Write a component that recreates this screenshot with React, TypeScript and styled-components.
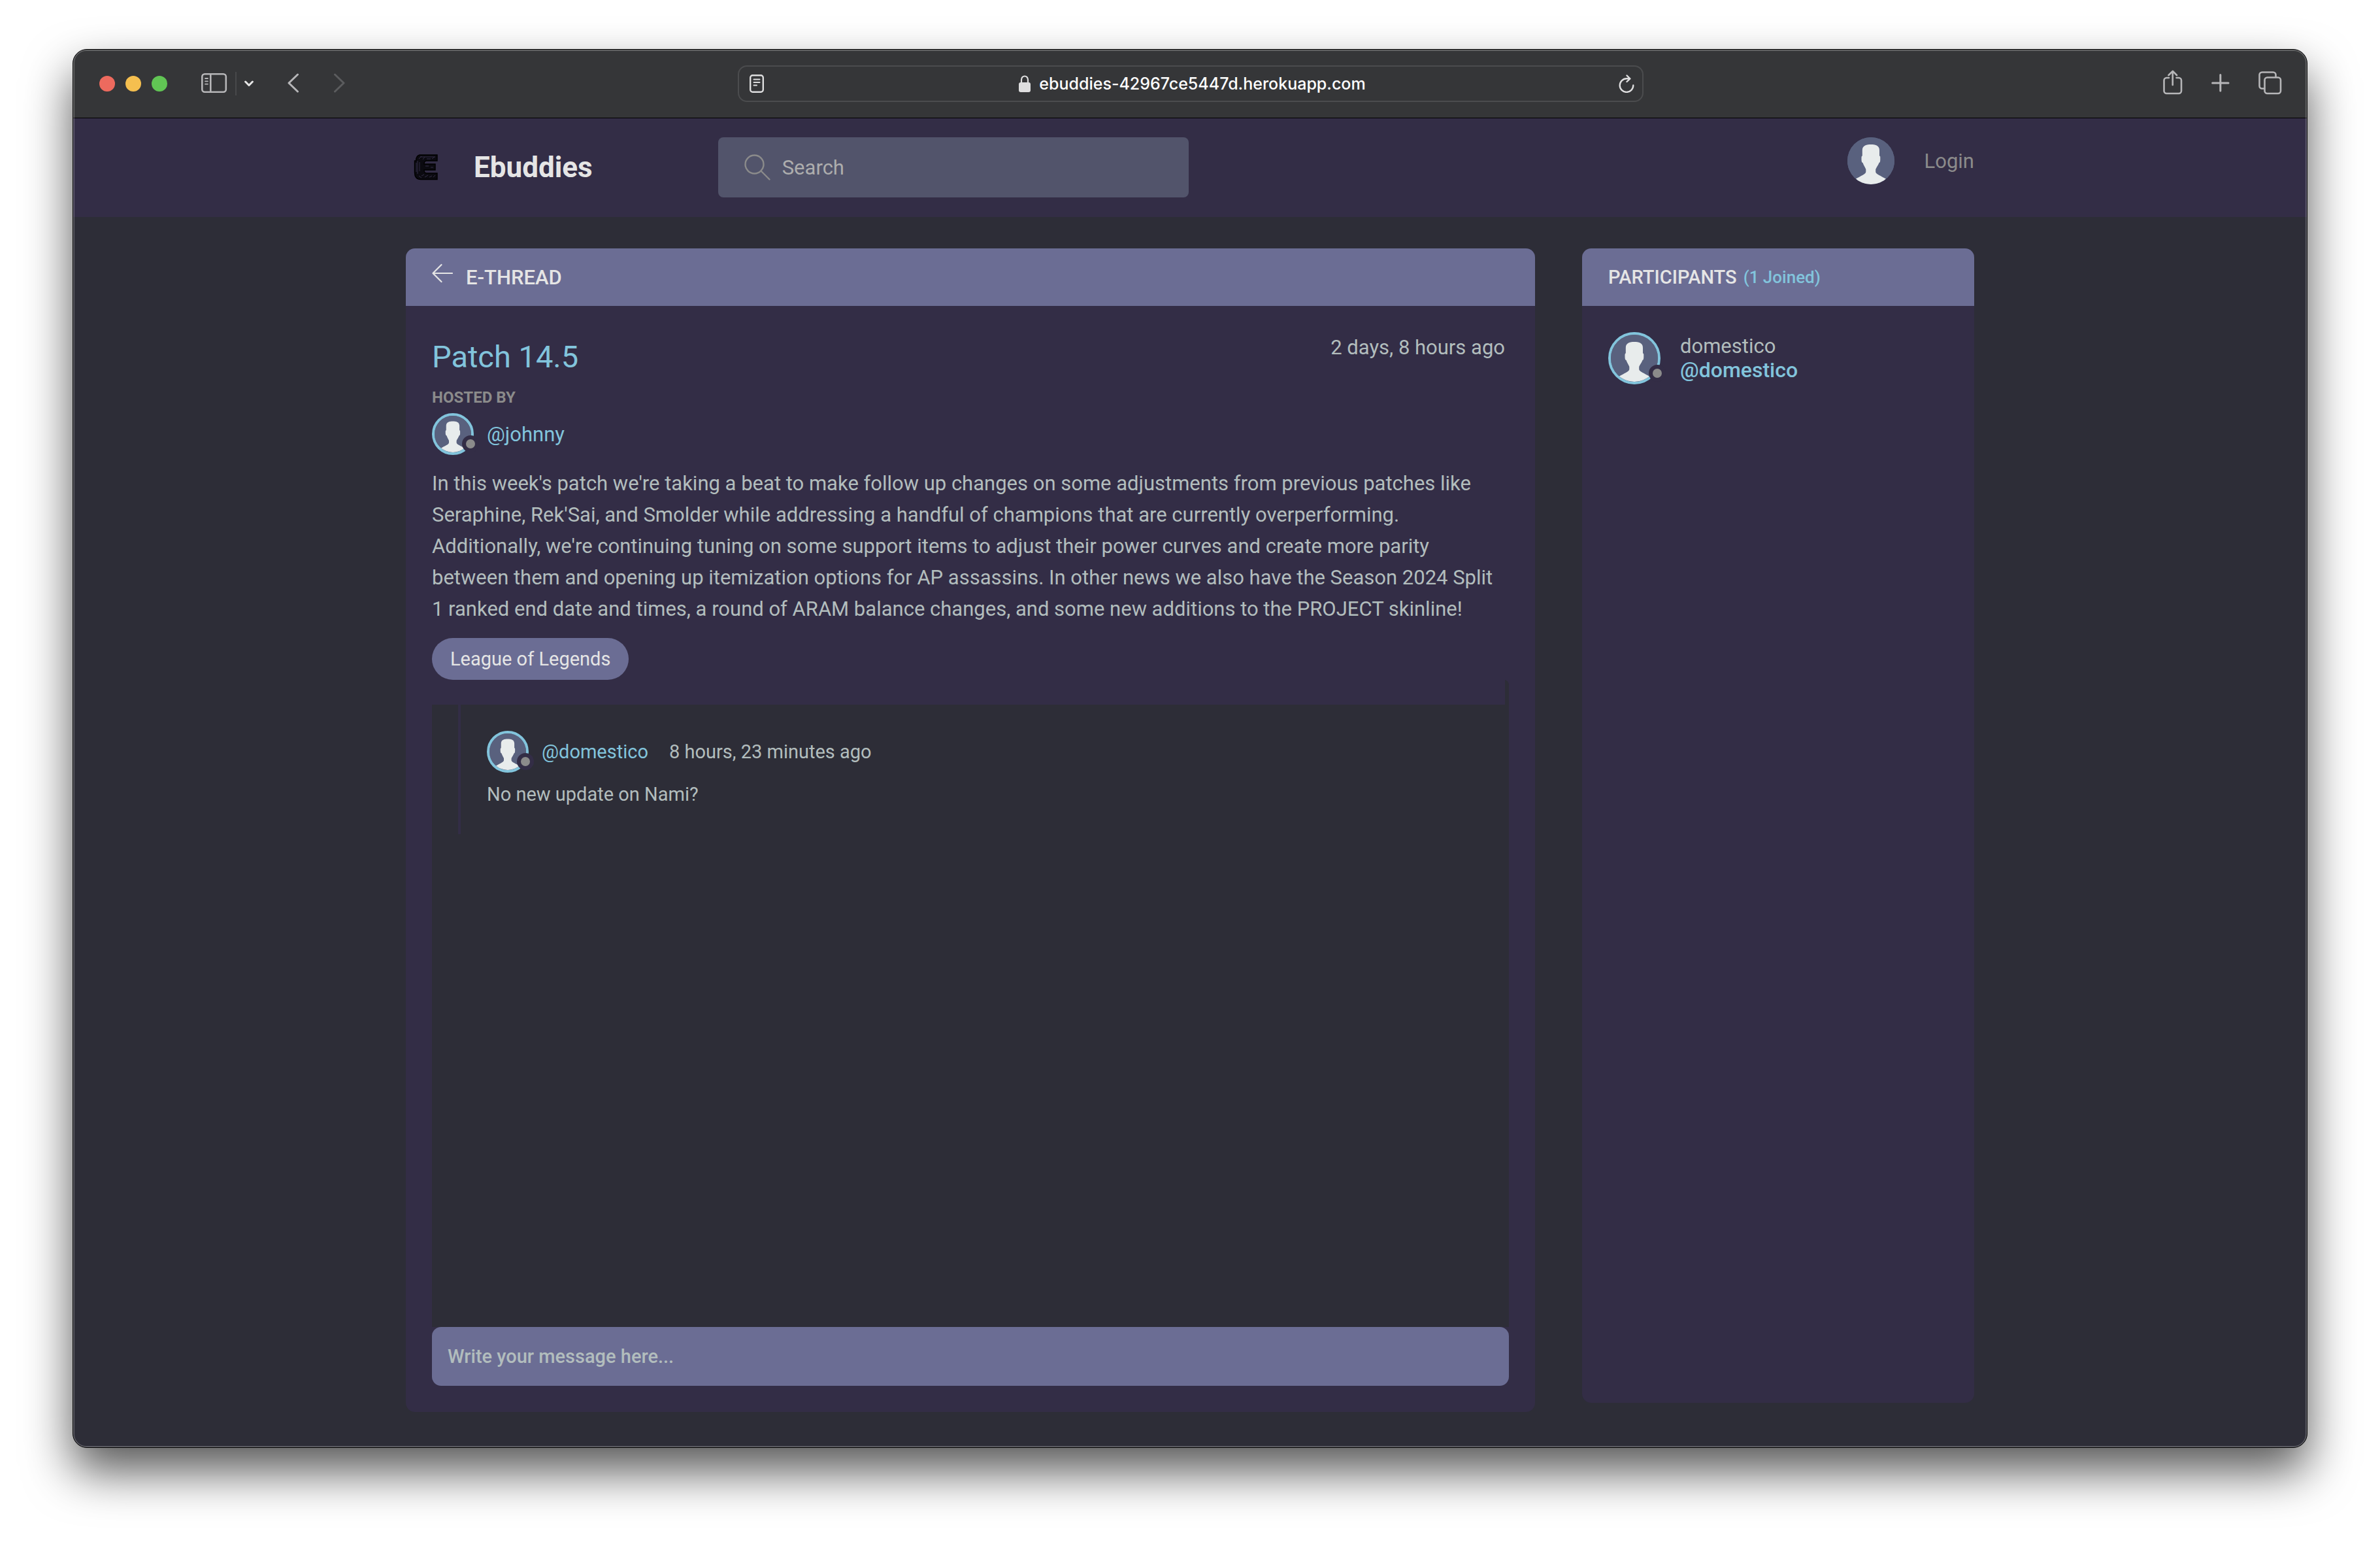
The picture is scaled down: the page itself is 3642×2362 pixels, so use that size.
import React from 'react';
import styled, { createGlobalStyle } from 'styled-components';

const color = {
  page: '#2d2d37',
  panel: '#332d46',
  bar: '#6b6d94',
  field: '#52546b',
  accent: '#82c4dc',
  light: '#e5e5e5',
  text: '#b2bdbd',
  gray: '#8b8b8b',
  chrome: '#353638',
  glyph: '#b6b6b8',
};

const GlobalStyle = createGlobalStyle`
  *, *::before, *::after { box-sizing: border-box; }
  body {
    margin: 0;
    background: #fff;
    color: ${color.text};
    font-family: Roboto, "Liberation Sans", sans-serif;
    font-size: 31px;
  }
  h1, h2, h3, p, ul { margin: 0; padding: 0; }
  ul { list-style: none; }
  a { color: inherit; text-decoration: none; }
  button, input { font-family: inherit; }
  svg { display: block; flex: none; }
`;

const Desktop = styled.div`
  display: flex;
  min-height: 100vh;
  padding: 75px 111px 147px;
`;

const BrowserWindow = styled.div`
  position: relative;
  display: flex;
  flex: 1;
  flex-direction: column;
  min-width: 0;
  overflow: hidden;
  border: 1px solid #000;
  border-radius: 22px;
  background: ${color.page};
  box-shadow: 0 36px 72px rgba(0, 0, 0, 0.66);

  &::after {
    content: '';
    position: absolute;
    inset: 0;
    border: 2px solid rgba(255, 255, 255, 0.22);
    border-radius: 20px;
    pointer-events: none;
  }
`;

const Chrome = styled.div`
  position: relative;
  display: grid;
  grid-template-columns: minmax(max-content, 1fr) minmax(0, 1386px) minmax(max-content, 1fr);
  align-items: center;
  height: 104px;
  padding: 0 38px 0 40px;
  background: ${color.chrome};
  box-shadow: 0 1px 0 #000;
`;

const ChromeGroup = styled.div<{ $end?: boolean }>`
  display: flex;
  align-items: center;
  justify-content: ${(p) => (p.$end ? 'flex-end' : 'flex-start')};
  gap: ${(p) => (p.$end ? 44 : 52)}px;
`;

const Lights = styled.div`
  display: flex;
  gap: 16px;
`;

const Light = styled.button<{ $fill: string }>`
  width: 24px;
  height: 24px;
  padding: 0;
  border: 0;
  border-radius: 50%;
  background: ${(p) => p.$fill};
`;

const SidebarControl = styled.div`
  display: flex;
  align-items: center;
  gap: 12px;
`;

const Divider = styled.span`
  width: 2px;
  height: 36px;
  background: #48494b;
`;

const IconButton = styled.button<{ $tone?: string }>`
  display: flex;
  padding: 0;
  border: 0;
  background: none;
  color: ${(p) => p.$tone ?? color.glyph};
`;

const AddressBar = styled.div`
  display: grid;
  grid-template-columns: 1fr auto 1fr;
  align-items: center;
  height: 56px;
  padding: 0 12px 0 16px;
  border: 2px solid #4b4c4e;
  border-radius: 14px;
`;

const Address = styled.button`
  display: flex;
  align-items: center;
  gap: 12px;
  padding: 0;
  border: 0;
  background: none;
  color: #fff;
  font: 500 25px/32px Inter, sans-serif;
`;

const ReloadSlot = styled.div`
  display: flex;
  justify-content: flex-end;
`;

const Container = styled.div`
  width: min(2400px, 92%);
  margin: 0 auto;
`;

const SiteHeader = styled.header`
  padding: 30px 0;
  background: ${color.panel};
`;

const HeaderRow = styled(Container)`
  display: flex;
  align-items: center;
`;

const Brand = styled.a`
  display: flex;
  align-items: center;
  gap: 44px;
  margin-right: 192px;
  color: ${color.light};
  font-size: 44px;
  font-weight: 700;
`;

const SearchForm = styled.form`
  display: flex;
  flex: 0 1 720px;
  align-items: center;
  gap: 18px;
  height: 92px;
  padding: 0 40px;
  border-radius: 8px;
  background: ${color.field};
  color: ${color.gray};
`;

const SearchInput = styled.input`
  flex: 1;
  min-width: 0;
  padding: 0;
  border: 0;
  outline: 0;
  background: none;
  color: ${color.light};
  font-size: 31px;

  &::placeholder { color: #adadad; opacity: 1; }
`;

const LoginLink = styled.a`
  display: flex;
  align-self: flex-start;
  align-items: center;
  gap: 46px;
  margin-left: auto;
  color: ${color.gray};
  font-size: 31px;
`;

const Columns = styled(Container)`
  display: grid;
  flex: 1;
  grid-template-columns: minmax(0, 2.88fr) minmax(0, 1fr);
  gap: 72px;
  padding: 48px 0 54px;
`;

const Panel = styled.section<{ $gapBelow?: boolean }>`
  display: flex;
  flex-direction: column;
  margin-bottom: ${(p) => (p.$gapBelow ? 14 : 0)}px;
  overflow: hidden;
  border-radius: 14px;
  background: ${color.panel};
`;

const PanelHeader = styled.div`
  display: flex;
  align-items: center;
  height: 88px;
  padding: 0 40px;
  background: ${color.bar};
`;

const PanelTitle = styled.h2<{ $small?: boolean }>`
  color: ${color.light};
  font-size: ${(p) => (p.$small ? 29 : 31)}px;
  font-weight: 500;
  text-transform: uppercase;
`;

const BackLink = styled.a`
  display: flex;
  margin-right: 20px;
  padding-bottom: 12px;
  color: ${color.light};
`;

const JoinedCount = styled.span`
  margin-left: 10px;
  color: ${color.accent};
  font-size: 26px;
  font-weight: 500;
`;

const ThreadBody = styled.div`
  display: flex;
  flex: 1;
  flex-direction: column;
  padding: 40px;
`;

const ThreadTop = styled.div`
  display: flex;
  align-items: flex-start;
  justify-content: space-between;
  padding-right: 6px;
`;

const ThreadTitle = styled.h3`
  color: ${color.accent};
  font-size: 47px;
  font-weight: 400;
  line-height: 76px;
`;

const ThreadTime = styled.time`
  line-height: 48px;
`;

const HostedBy = styled.p`
  color: ${color.gray};
  font-size: 24px;
  font-weight: 700;
  line-height: 48px;
  text-transform: uppercase;
`;

const PersonLine = styled.div`
  display: flex;
  align-items: center;
  gap: 20px;
`;

const PersonLink = styled.a<{ $size?: number; $strong?: boolean }>`
  color: ${color.accent};
  font-size: ${(p) => p.$size ?? 31}px;
  font-weight: ${(p) => (p.$strong ? 500 : 400)};
`;

const Description = styled.p`
  margin: 20px 0;
  line-height: 48px;
`;

const Tag = styled.a`
  display: flex;
  align-items: center;
  align-self: flex-start;
  height: 64px;
  padding: 0 28px;
  border-radius: 32px;
  background: ${color.bar};
  color: ${color.light};
  font-size: 29px;
`;

const Comments = styled.div`
  flex: 1;
  border-top-right-radius: 8px;
  background: ${color.page};

  &::before {
    content: '';
    display: block;
    height: 38px;
    margin-right: 6px;
    background: ${color.panel};
  }
`;

const Comment = styled.article`
  display: grid;
  gap: 12px;
  margin-left: 40px;
  padding: 40px;
  border-left: 4px solid ${color.panel};
  font-size: 29px;
`;

const CommentTime = styled.time`
  margin-left: 12px;
`;

const CommentText = styled.p`
  line-height: 42px;
`;

const MessageForm = styled.form`
  display: flex;
`;

const MessageInput = styled.input`
  flex: 1;
  min-width: 0;
  height: 90px;
  padding: 0 24px;
  border: 0;
  border-radius: 14px;
  outline: 0;
  background: ${color.bar};
  color: ${color.light};
  font-size: 29px;
  font-weight: 500;

  &::placeholder { color: ${color.text}; opacity: 1; }
`;

const People = styled.ul`
  padding: 40px;
`;

const Person = styled.li`
  display: flex;
  align-items: center;
  gap: 30px;
`;

const PersonNames = styled.div`
  display: grid;
  line-height: 36px;
`;

const AvatarFrame = styled.div<{ $size: number; $ring?: boolean }>`
  position: relative;
  flex: none;
  width: ${(p) => p.$size}px;
  height: ${(p) => p.$size}px;
  border: ${(p) => (p.$ring ? `4px solid ${color.accent}` : '0')};
  border-radius: 50%;
  background: #59617e;

  svg {
    width: 100%;
    height: 100%;
    border-radius: 50%;
  }
`;

const StatusDot = styled.span`
  position: absolute;
  right: -12px;
  bottom: 0;
  width: 26px;
  height: 26px;
  border: 6px solid ${color.panel};
  border-radius: 50%;
  background: ${color.gray};
`;

function Avatar({ size, ring }: { size: number; ring?: boolean }) {
  return (
    <AvatarFrame $size={size} $ring={ring}>
      <svg viewBox="0 0 72 72" aria-hidden="true">
        <rect width="72" height="72" fill="#59617e" />
        <path
          fill="#e8ecec"
          d="M36 11C42 11 49 12 49 20V28.5C50.5 28.5 50.3 30 50.3 33C50.3 37 50 38.5 48.5 39C47 43 45 45 43.2 49V53C44 56 46 56.5 58.8 63.5V72H13V63.5C26 56.5 27.5 56 28.3 53V49C26.5 45 25 43 23.5 39C22 38.5 21.5 37 21.5 33C21.5 30 21.5 28.5 22.8 28.5V20C22.8 12 30 11 36 11Z"
        />
      </svg>
      {ring && <StatusDot />}
    </AvatarFrame>
  );
}

function ChromeIcon({ width, stroke = 2.6, children }: { width: number; stroke?: number; children: React.ReactNode }) {
  return (
    <svg
      width={width}
      height="42"
      viewBox={`0 0 ${width} 42`}
      fill="none"
      stroke="currentColor"
      strokeWidth={stroke}
      strokeLinecap="round"
      strokeLinejoin="round"
      aria-hidden="true"
    >
      {children}
    </svg>
  );
}

function Logo() {
  return (
    <svg width="60" height="40" viewBox="0 0 60 40" fill="none" aria-hidden="true">
      <path
        d="M21 1H48V10H32C29 10 28 12 28 15H45V24H28C28 27 29 29 32 29H48V38.500H23C16 38.500 13.500 34 13.500 28V10H15.500C15.500 5 17 2 21 1Z"
        fill="#0b0a10"
        stroke="#000"
        strokeWidth="1.4"
      />
      <path
        d="M22 4H45M20 7L24 3M26 8L29 4M32 7H38M40 7L44 4M18 10V30M21 12V26M24 33L28 31M29 35L34 32M36 35L40 33M42 35L45 32M30 18H35M38 20H42M20 33L24 36M16 13V27"
        stroke="#332d46"
        strokeWidth="1"
      />
    </svg>
  );
}

function BrowserChrome() {
  return (
    <Chrome>
      <ChromeGroup>
        <Lights>
          <Light $fill="#ed6a5e" aria-label="Close" />
          <Light $fill="#f5bf4f" aria-label="Minimise" />
          <Light $fill="#61c554" aria-label="Full screen" />
        </Lights>
        <SidebarControl>
          <IconButton aria-label="Show sidebar">
            <ChromeIcon width={40}>
              <rect x="1.300" y="6.300" width="36.500" height="27.500" rx="4" />
              <path d="M14.300 6.500V33.500" />
              <path d="M6 13H10M6 17.300H10M6 21.600H10" strokeWidth="1.800" />
            </ChromeIcon>
          </IconButton>
          <Divider />
          <IconButton aria-label="Sidebar menu" $tone="#e6e6e6">
            <ChromeIcon width={14} stroke={3}>
              <path d="M1.600 18L7 23.500L12.400 18" />
            </ChromeIcon>
          </IconButton>
        </SidebarControl>
        <IconButton aria-label="Back">
          <ChromeIcon width={18} stroke={3}>
            <path d="M15.500 7L2 20L15.500 33" />
          </ChromeIcon>
        </IconButton>
        <IconButton aria-label="Forward" $tone="#5b5c5e">
          <ChromeIcon width={18} stroke={3}>
            <path d="M2.500 7L16 20L2.500 33" />
          </ChromeIcon>
        </IconButton>
      </ChromeGroup>

      <AddressBar>
        <IconButton aria-label="Show reader" $tone="#dededf">
          <svg width="22" height="28" viewBox="0 0 22 28" fill="none" stroke="currentColor" strokeLinecap="round" aria-hidden="true">
            <rect x="1.200" y="1.200" width="19.600" height="25.600" rx="3.500" strokeWidth="2.400" />
            <path d="M6.500 7.500H15.500M6.500 12H15.500M6.500 16.500H11" strokeWidth="2" />
          </svg>
        </IconButton>
        <Address>
          <svg width="20" height="26" viewBox="0 0 20 26" aria-hidden="true">
            <rect x="1" y="11" width="18" height="15" rx="3" fill="#dededf" />
            <path d="M5 12V7a5 5.500 0 0 1 10 0V12" fill="none" stroke="#dededf" strokeWidth="2.200" />
          </svg>
          ebuddies-42967ce5447d.herokuapp.com
        </Address>
        <ReloadSlot>
          <IconButton aria-label="Reload" $tone="#dededf">
            <svg width="24" height="28" viewBox="0 0 24 28" fill="none" stroke="currentColor" strokeWidth="2.400" strokeLinecap="round" strokeLinejoin="round" aria-hidden="true">
              <path d="M17 6.300H12A10.300 10.300 0 1 0 22.300 16.500" />
              <path d="M12.500 1.500L17.300 6.300L12.500 11" />
            </svg>
          </IconButton>
        </ReloadSlot>
      </AddressBar>

      <ChromeGroup $end>
        <IconButton aria-label="Share">
          <ChromeIcon width={30}>
            <path d="M9 12H5.500A4 4 0 0 0 1.500 16V32A4 4 0 0 0 5.500 36H24A4 4 0 0 0 28 32V16A4 4 0 0 0 24 12H20.500" />
            <path d="M14.700 23V2M8.500 8L14.700 1.800L21 8" />
          </ChromeIcon>
        </IconButton>
        <IconButton aria-label="New tab">
          <ChromeIcon width={28} stroke={3}>
            <path d="M1.600 20H26M13.800 7.500V32" />
          </ChromeIcon>
        </IconButton>
        <IconButton aria-label="Tab overview">
          <ChromeIcon width={36}>
            <rect x="9.500" y="11.500" width="24.500" height="24.500" rx="4" />
            <path d="M26.500 11V7.500A4 4 0 0 0 22.500 3.500H5.500A4 4 0 0 0 1.500 7.500V24.500A4 4 0 0 0 5.500 28.500H9" />
          </ChromeIcon>
        </IconButton>
      </ChromeGroup>
    </Chrome>
  );
}

export default function App() {
  return (
    <>
      <GlobalStyle />
      <Desktop>
        <BrowserWindow>
          <BrowserChrome />
          <SiteHeader>
            <HeaderRow>
              <Brand href="#">
                <Logo />
                Ebuddies
              </Brand>
              <SearchForm role="search">
                <svg width="40" height="40" viewBox="0 0 40 40" fill="none" stroke="currentColor" strokeWidth="2.400" strokeLinecap="round" aria-hidden="true">
                  <circle cx="15.500" cy="15.500" r="14" />
                  <path d="M25.500 25.500L38.500 38.500" />
                </svg>
                <SearchInput type="search" placeholder="Search" aria-label="Search" />
              </SearchForm>
              <LoginLink href="#">
                <Avatar size={72} />
                Login
              </LoginLink>
            </HeaderRow>
          </SiteHeader>

          <Columns as="main">
            <Panel>
              <PanelHeader>
                <BackLink href="#" aria-label="Back to threads">
                  <svg width="32" height="32" viewBox="0 0 32 32" fill="none" stroke="currentColor" strokeWidth="2.200" strokeLinecap="round" strokeLinejoin="round" aria-hidden="true">
                    <path d="M14.500 3L1.500 16L14.500 29M1.500 16H31" />
                  </svg>
                </BackLink>
                <PanelTitle>E-Thread</PanelTitle>
              </PanelHeader>
              <ThreadBody>
                <ThreadTop>
                  <ThreadTitle>Patch 14.5</ThreadTitle>
                  <ThreadTime>2 days, 8 hours ago</ThreadTime>
                </ThreadTop>
                <HostedBy>Hosted by</HostedBy>
                <PersonLine>
                  <Avatar size={64} ring />
                  <PersonLink href="#">@johnny</PersonLink>
                </PersonLine>
                <Description>
                  In this week's patch we're taking a beat to make follow up changes on some adjustments from
                  previous patches like Seraphine, Rek'Sai, and Smolder while addressing a handful of champions
                  that are currently overperforming. Additionally, we're continuing tuning on some support items
                  to adjust their power curves and create more parity between them and opening up itemization
                  options for AP assassins. In other news we also have the Season 2024 Split 1 ranked end date
                  and times, a round of ARAM balance changes, and some new additions to the PROJECT skinline!
                </Description>
                <Tag href="#">League of Legends</Tag>
                <Comments>
                  <Comment>
                    <PersonLine>
                      <Avatar size={64} ring />
                      <PersonLink href="#" $size={29}>@domestico</PersonLink>
                      <CommentTime>8 hours, 23 minutes ago</CommentTime>
                    </PersonLine>
                    <CommentText>No new update on Nami?</CommentText>
                  </Comment>
                </Comments>
                <MessageForm>
                  <MessageInput type="text" placeholder="Write your message here..." aria-label="Message" />
                </MessageForm>
              </ThreadBody>
            </Panel>

            <Panel as="aside" $gapBelow>
              <PanelHeader>
                <PanelTitle $small>Participants</PanelTitle>
                <JoinedCount>(1 Joined)</JoinedCount>
              </PanelHeader>
              <People>
                <Person>
                  <Avatar size={80} ring />
                  <PersonNames>
                    <span>domestico</span>
                    <PersonLink href="#" $size={32} $strong>@domestico</PersonLink>
                  </PersonNames>
                </Person>
              </People>
            </Panel>
          </Columns>
        </BrowserWindow>
      </Desktop>
    </>
  );
}
